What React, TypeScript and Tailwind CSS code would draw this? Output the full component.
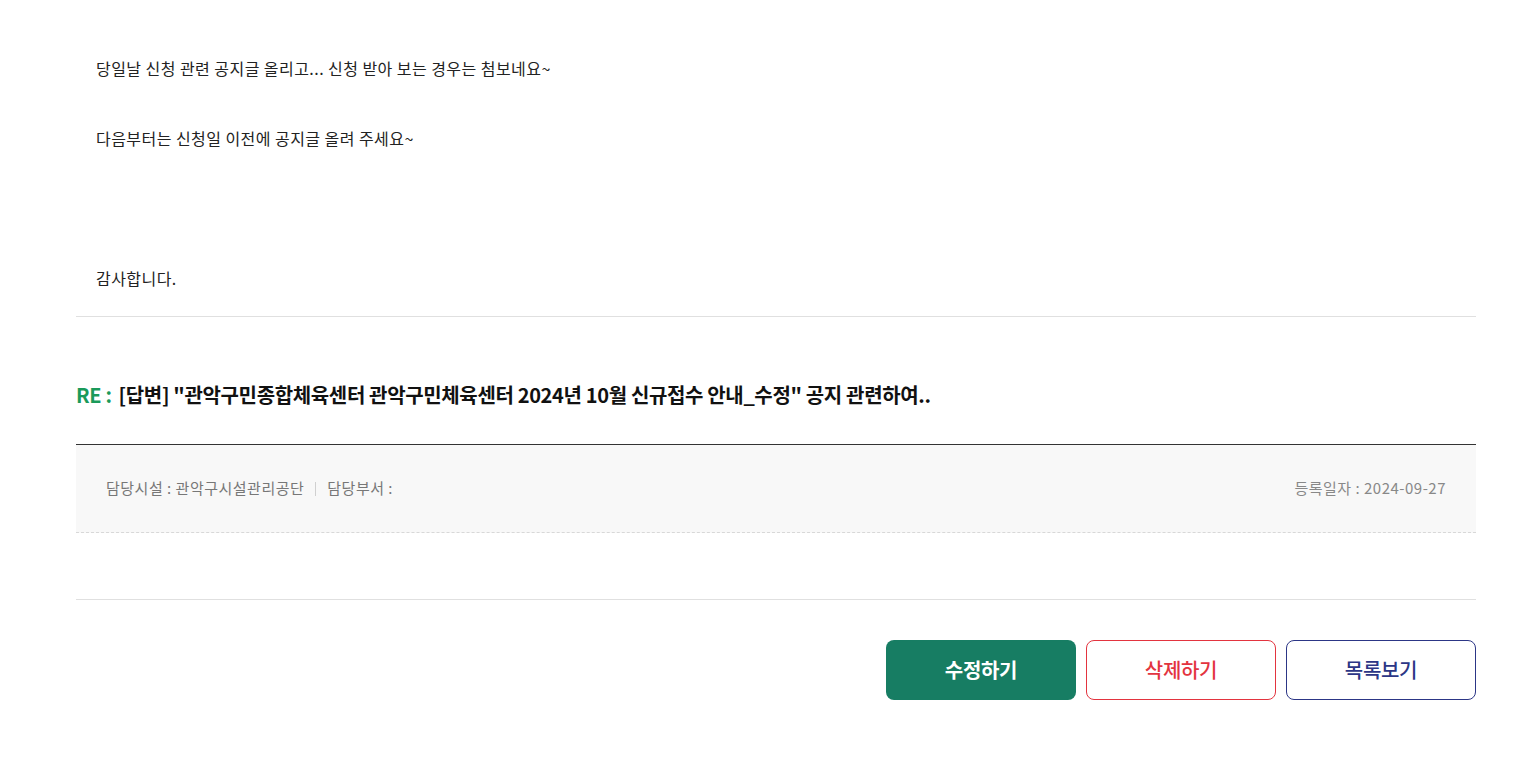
import React from "react";

const font = { fontFamily: '"Noto Sans CJK KR", "Noto Sans", sans-serif' };

export default function App() {
  return (
    <div className="min-h-[759px] bg-white" style={font}>
      <div className="ml-[76px] w-[1400px]">
        <div className="border-b border-[#e0e0e0] px-[20px] pt-[51px] pb-[20px] text-[16px] leading-[35px] tracking-[0.45px] text-[#222]">
          <p>당일날 신청 관련 공지글 올리고... 신청 받아 보는 경우는 첨보네요~</p>
          <p>&nbsp;</p>
          <p>다음부터는 신청일 이전에 공지글 올려 주세요~</p>
          <p>&nbsp;</p>
          <p>&nbsp;</p>
          <p>&nbsp;</p>
          <p>감사합니다.</p>
        </div>

        <div className="flex items-center pt-[63px] pb-[34px] text-[20px] font-bold leading-[30px] tracking-[-0.35px]">
          <span className="mr-[7px] text-[#1a9a5a]">RE :</span>
          <span className="text-[#111]">[답변] "관악구민종합체육센터 관악구민체육센터 2024년 10월 신규접수 안내_수정" 공지 관련하여..</span>
        </div>

        <div className="border-t border-[#333]">
          <div className="flex h-[88px] items-center justify-between border-b border-dashed border-[#d8d8d8] bg-[#f8f8f8] px-[30px] text-[15px] tracking-[0.5px] text-[#777]">
            <div className="flex items-center">
              <span>담당시설 : 관악구시설관리공단</span>
              <span className="mx-[11px] h-[14px] w-px bg-[#d0d0d0]" />
              <span>담당부서 :</span>
            </div>
            <span className="text-[#888]">등록일자 : 2024-09-27</span>
          </div>
        </div>

        <div className="h-[67px] border-b border-[#e0e0e0]" />

        <div className="flex justify-end gap-[10px] pt-[40px]">
          <button className="flex h-[60px] w-[190px] items-center justify-center rounded-[8px] bg-[#177d63] text-[20px] font-bold tracking-[-0.3px] text-white">
            수정하기
          </button>
          <button className="flex h-[60px] w-[190px] items-center justify-center rounded-[8px] border border-[#e3343f] bg-white text-[20px] font-medium tracking-[-0.3px] text-[#e3343f]">
            삭제하기
          </button>
          <button className="flex h-[60px] w-[190px] items-center justify-center rounded-[8px] border border-[#2c3686] bg-white text-[20px] font-medium tracking-[-0.3px] text-[#2c3686]">
            목록보기
          </button>
        </div>
      </div>
    </div>
  );
}
